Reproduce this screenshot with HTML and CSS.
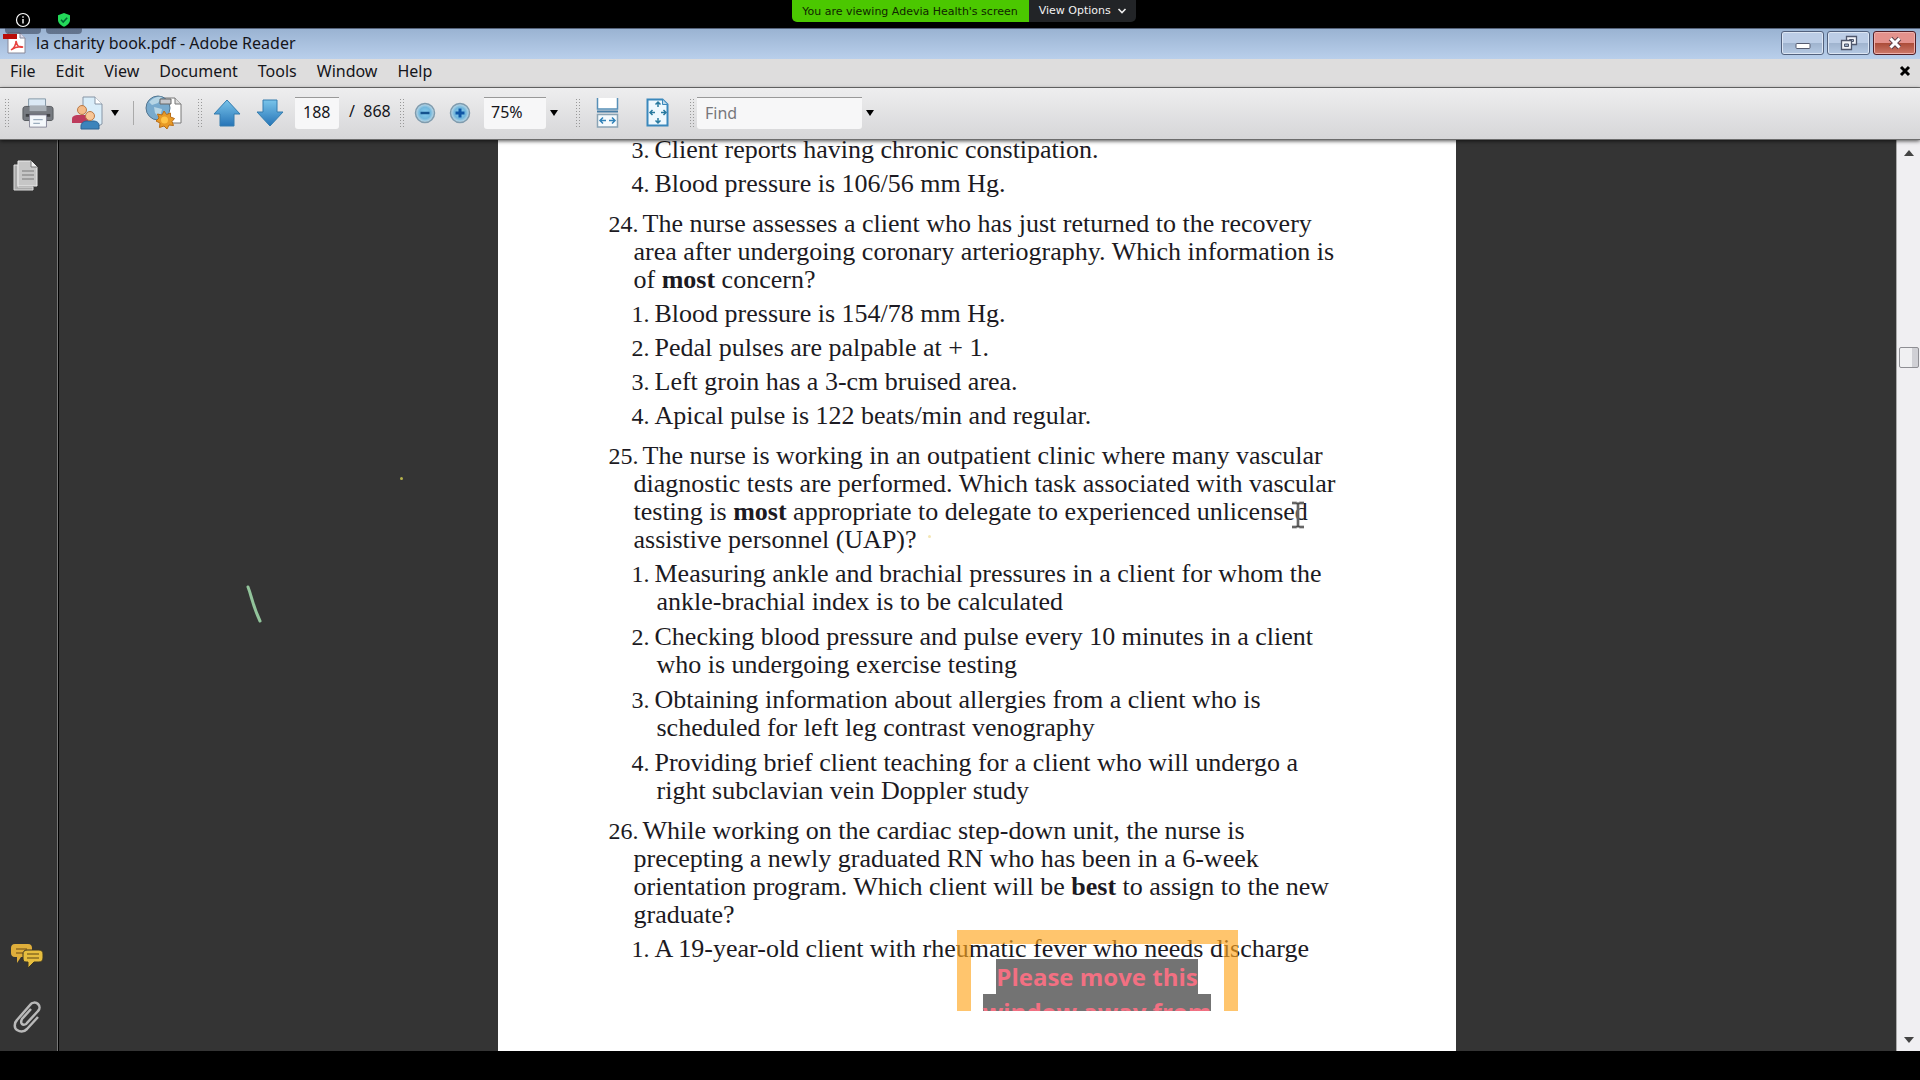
FILE: index.html
```html
<!DOCTYPE html>
<html lang="en">
<head>
<meta charset="utf-8">
<title>la charity book.pdf - Adobe Reader</title>
<link rel="stylesheet" href="styles.css">
</head>
<body>
<header class="meeting-bar">
  <div class="meeting-tools">
    <button class="meeting-tool" aria-label="Meeting information">
      <svg width="16" height="16" viewBox="0 0 16 16"><circle cx="8" cy="8" r="6.5" fill="none" stroke="#fff" stroke-width="1.2"/><path d="M8 7v4.5M8 4.2v1.5" stroke="#fff" stroke-width="1.4"/></svg>
    </button>
    <button class="meeting-tool" aria-label="Encryption">
      <svg width="14" height="16" viewBox="0 0 14 16"><path d="M7 1l6 2.2v4.5c0 3.4-2.6 5.600-6 7.100-3.400-1.500-6-3.700-6-7.100V3.200z" fill="#23d959"/><path d="M4 7.800l2.200 2.200 4-4.200" fill="none" stroke="#063" stroke-width="1.600"/></svg>
    </button>
  </div>
  <div class="share-status">
    <span class="share-label">You are viewing Adevia Health's screen</span>
    <button class="share-options">View Options
      <svg width="10" height="6" viewBox="0 0 10 6"><path d="M1.500 1l3.500 3.500L8.500 1" fill="none" stroke="#eee" stroke-width="1.600"/></svg>
    </button>
  </div>
</header>

<div class="reader">
  <div class="title-bar">
    <svg class="app-icon" width="24" height="22" viewBox="0 0 24 22"><path d="M6 1h12l5 5v15H6z" fill="#fff" stroke="#889" /><path d="M18 1v5h5" fill="#dde" stroke="#889"/><path d="M1 2h14v5H1z" fill="#b90d08"/><path d="M9 18c3-2 5-6 5-9 1 5 3 7 7 6-4-1-8 0-12 3z" fill="none" stroke="#e8423f" stroke-width="1.500"/></svg>
    <h1 class="title">la charity book.pdf - Adobe Reader</h1>
    <div class="window-buttons">
      <button class="window-button" aria-label="Minimize"><svg width="16" height="16" viewBox="0 0 16 16"><rect x="1" y="8.500" width="14" height="5" rx="1" fill="#fff" stroke="#555b70"/></svg></button>
      <button class="window-button" aria-label="Restore"><svg width="18" height="18" viewBox="0 0 18 18"><path d="M6.500 2.500h10v8h-10z" fill="#f3f5fa" stroke="#4e566c" stroke-width="1.300"/><path d="M9.500 5.500h4v2h-4z" fill="#b4c3da" stroke="#4e566c"/><path d="M1.500 6.500h10v9h-10z" fill="#f3f5fa" stroke="#4e566c" stroke-width="1.300"/><path d="M4.500 10h4v2.500h-4z" fill="#9cafc9" stroke="#4e566c"/></svg></button>
      <button class="window-button window-close" aria-label="Close"><svg width="16" height="14" viewBox="0 0 16 14"><path d="M3.500 2.500l9 9M12.500 2.500l-9 9" stroke="#624048" stroke-width="5"/><path d="M3.500 2.500l9 9M12.500 2.500l-9 9" stroke="#fff" stroke-width="3"/></svg></button>
    </div>
  </div>

  <nav class="menu-bar">
    <button class="menu">File</button>
    <button class="menu">Edit</button>
    <button class="menu">View</button>
    <button class="menu">Document</button>
    <button class="menu">Tools</button>
    <button class="menu">Window</button>
    <button class="menu">Help</button>
    <button class="document-close" aria-label="Close document"><svg width="12" height="12" viewBox="0 0 12 12"><path d="M2 2l8 8M10 2l-8 8" stroke="#000" stroke-width="3"/></svg></button>
  </nav>

  <div class="toolbar">
    <span class="grip"></span>
    <button class="tool tool-print" aria-label="Print"><svg width="32" height="34" viewBox="0 0 34 34"><path d="M7 2h18v12H7z" fill="#dbe9f5" stroke="#8195a5"/><path d="M4 10h26c2 0 3 1 3 3v10c0 1-1 2-2 2H3c-1 0-2-1-2-2V13c0-2 1-3 3-3z" fill="#777b81" stroke="#54575c"/><path d="M8 9h18v6H8z" fill="#a9b0b7"/><path d="M4 18h26v3H4z" fill="#404246"/><path d="M8 19h18v13H8z" fill="#f4f8fb" stroke="#889"/><path d="M12 24h10M12 28h7" stroke="#9aacbd" stroke-width="1.500"/></svg></button>
    <button class="tool tool-share" aria-label="Collaborate"><svg width="34" height="36" viewBox="0 0 34 36"><path d="M12 2h12l7 7v20l-7 4H12z" fill="#d9edf9" stroke="#8795a5"/><path d="M24 2v7h7" fill="#fff" stroke="#8795a5"/><path d="M1 28v-4c0-3 3-4 6-4h6c4 0 5 2 5 4v4z" fill="#bd3b5c"/><circle cx="11" cy="15" r="4.500" fill="#f4bb88" stroke="#b97945"/><path d="M10 34v-3c0-3 3-5 6-5h6c4 0 6 2 6 4v4z" fill="#3c84bb" stroke="#2c6493"/><circle cx="19" cy="21" r="4.500" fill="#f8c797" stroke="#b97945"/></svg><svg width="8" height="6" viewBox="0 0 8 6"><path d="M0 0h8L4 6z"/></svg></button>
    <span class="separator"></span>
    <button class="tool tool-web" aria-label="Web capture"><svg width="38" height="36" viewBox="0 0 38 36"><path d="M17 3h13l6 6v19H17z" fill="#fff" stroke="#777"/><path d="M30 3v6h6" fill="#ddd" stroke="#777"/><circle cx="13" cy="13" r="12" fill="#78aacd" stroke="#53758f"/><path d="M4 7c4-5 10-6 13-5l-4 6-6 2zM9 12l8 2-2 9-5-5z" fill="#b6d5e5"/><path d="M15 4h11v5H15z" fill="#c5c7cc" stroke="#666"/><path d="M19 16l2.500 3.500 4-1.500v4l4 1.500-2.500 3 1.500 4-4.500-.5-2 4-3-3-4.500 1.500.5-4.500-4-2 3-3-1.500-4 4.500 1z" fill="#e89a26" stroke="#b96d16"/><circle cx="19.500" cy="25" r="3.500" fill="#ffc346"/></svg></button>
    <span class="grip"></span>
    <button class="tool tool-page" aria-label="Previous page"><svg width="28" height="28" viewBox="0 0 28 28"><defs><linearGradient id="arrow-fill" x2="0" y2="1"><stop stop-color="#79c4ea"/><stop offset="1" stop-color="#2674b7"/></linearGradient></defs><path d="M14 1l13 14h-6v12H7V15H1z" fill="url(#arrow-fill)" stroke="#347daf"/></svg></button>
    <button class="tool tool-page" aria-label="Next page"><svg width="28" height="28" viewBox="0 0 28 28"><path d="M14 27L1 13h6V1h14v12h6z" fill="url(#arrow-fill)" stroke="#347daf"/></svg></button>
    <input class="field page-field" type="text" value="188" aria-label="Page number">
    <span class="page-count">/&nbsp; 868</span>
    <span class="grip"></span>
    <button class="tool tool-zoom" aria-label="Zoom out"><svg width="24" height="24" viewBox="0 0 24 24"><defs><radialGradient id="zoom-fill"><stop stop-color="#86cff2"/><stop offset=".6" stop-color="#72b7dc"/><stop offset="1" stop-color="#c7dce8"/></radialGradient></defs><circle cx="12" cy="12" r="9.500" fill="url(#zoom-fill)" stroke="#7f9bad" stroke-width="1.500"/><path d="M7.500 12h9" stroke="#14528e" stroke-width="2.500"/></svg></button>
    <button class="tool tool-zoom" aria-label="Zoom in"><svg width="24" height="24" viewBox="0 0 24 24"><circle cx="12" cy="12" r="9.500" fill="url(#zoom-fill)" stroke="#7f9bad" stroke-width="1.500"/><path d="M7.500 12h9M12 7.500v9" stroke="#0f56a5" stroke-width="3"/></svg></button>
    <span class="combo">
      <select class="field zoom-field" aria-label="Zoom level"><option>75%</option></select>
      <svg class="combo-caret" width="8" height="6" viewBox="0 0 8 6"><path d="M0 0h8L4 6z"/></svg>
    </span>
    <span class="grip"></span>
    <button class="tool tool-fit" aria-label="Fit width"><svg width="24" height="32" viewBox="0 0 24 32"><path d="M1.500 1v11h20V1" fill="#fff" stroke="#5790b8" stroke-width="1.500"/><path d="M1 14.500h21" stroke="#477da5" stroke-width="2"/><path d="M1.500 30V17.500h20V30z" fill="#f5fafd" stroke="#8aa4b5" stroke-width="1.500"/><path d="M10 23.500H4M7 20.500l-3 3 3 3M13 23.500h6M16 20.500l3 3-3 3" fill="none" stroke="#3182b8" stroke-width="1.500"/></svg></button>
    <button class="tool tool-fit" aria-label="Fit page"><svg width="24" height="30" viewBox="0 0 24 30"><path d="M1.500 1.500h15l5 5v21h-20z" fill="#eef8fe" stroke="#3a88bc" stroke-width="2"/><path d="M16.500 1.500v5h5" fill="#bcd9eb" stroke="#3a88bc"/><path d="M12 9V4M9.500 6.500L12 4l2.500 2.500M12 20v5M9.500 22.500L12 25l2.500-2.500M9 14.500H4M6.500 12L4 14.500 6.500 17M15 14.500h5M17.500 12l2.500 2.500-2.500 2.500" fill="none" stroke="#28799f" stroke-width="1.500"/></svg></button>
    <span class="grip"></span>
    <input class="field find-field" type="text" placeholder="Find" aria-label="Find">
    <button class="find-menu" aria-label="Find options"><svg width="8" height="6" viewBox="0 0 8 6"><path d="M0 0h8L4 6z"/></svg></button>
  </div>

  <div class="workspace">
    <aside class="side-panel">
      <button class="panel-button" aria-label="Pages"><svg width="28" height="34" viewBox="0 0 28 34"><path d="M2 6h4v22h15v3H2z" fill="#aaa" stroke="#ddd"/><path d="M6 2h13l6 6v19H6z" fill="#c6c6c6" stroke="#eee"/><path d="M19 2v6h6" fill="#eee" stroke="#777"/><path d="M10 12h12M10 16h12M10 20h12" stroke="#929292" stroke-width="1.500"/></svg></button>
      <button class="panel-button panel-comments" aria-label="Comments"><svg width="34" height="28" viewBox="0 0 34 28"><path d="M5 2h13c3 0 4 2 4 4v5c0 2-1 4-4 4h-7l-4 6v-6H5c-3 0-4-2-4-4V6c0-2 1-4 4-4z" fill="#dfae3b"/><path d="M6 7h11M6 11h7" stroke="#916b22" stroke-width="1.500"/><path d="M17 8h12c3 0 4 2 4 4v4c0 3-2 4-4 4h-5l-6 6v-6h-2c-2 0-3-1-3-4v-4c0-2 1-4 4-4z" fill="#e6bd3e" stroke="#3b3522"/><path d="M17 12h12M17 16h12" stroke="#8b6d23" stroke-width="1.500"/></svg></button>
      <button class="panel-button" aria-label="Attachments"><svg width="30" height="34" viewBox="0 0 30 34"><path d="M26 17L15 29c-3 3-7 3-10 1s-3-7 0-10L18 5c2-3 6-3 8-1s2 5 0 7L15 23c-1 2-4 2-5 1s-1-3 0-5l9-10" fill="none" stroke="#b9b9b9" stroke-width="2.500"/></svg></button>
    </aside>

    <main class="canvas">
      <article class="page">
        <ul class="options">
          <li><span class="mark">3.</span>Client reports having chronic constipation.</li>
          <li><span class="mark">4.</span>Blood pressure is 106/56 mm Hg.</li>
        </ul>
        <p class="question"><span class="number">24.</span>The nurse assesses a client who has just returned to the recovery<br>area after undergoing coronary arteriography. Which information is<br>of <b>most</b> concern?</p>
        <ul class="options">
          <li><span class="mark">1.</span>Blood pressure is 154/78 mm Hg.</li>
          <li><span class="mark">2.</span>Pedal pulses are palpable at + 1.</li>
          <li><span class="mark">3.</span>Left groin has a 3-cm bruised area.</li>
          <li><span class="mark">4.</span>Apical pulse is 122 beats/min and regular.</li>
        </ul>
        <p class="question"><span class="number">25.</span>The nurse is working in an outpatient clinic where many vascular<br>diagnostic tests are performed. Which task associated with vascular<br>testing is <b>most</b> appropriate to delegate to experienced unlicensed<br>assistive personnel (UAP)?</p>
        <ul class="options options-long">
          <li><span class="mark">1.</span>Measuring ankle and brachial pressures in a client for whom the<br>ankle-brachial index is to be calculated</li>
          <li><span class="mark">2.</span>Checking blood pressure and pulse every 10 minutes in a client<br>who is undergoing exercise testing</li>
          <li><span class="mark">3.</span>Obtaining information about allergies from a client who is<br>scheduled for left leg contrast venography</li>
          <li><span class="mark">4.</span>Providing brief client teaching for a client who will undergo a<br>right subclavian vein Doppler study</li>
        </ul>
        <p class="question"><span class="number">26.</span>While working on the cardiac step-down unit, the nurse is<br>precepting a newly graduated RN who has been in a 6-week<br>orientation program. Which client will be <b>best</b> to assign to the new<br>graduate?</p>
        <ul class="options">
          <li><span class="mark">1.</span>A 19-year-old client with rheumatic fever who needs discharge</li>
        </ul>
        <div class="notice"><p class="notice-text"><span>Please move this<br>window away from</span></p></div>
        <svg class="text-cursor" width="14" height="28" viewBox="0 0 14 28"><path d="M1 2h4l2 1 2-1h4M7 3v22M1 26h4l2-1 2 1h4" fill="none" stroke="#999" stroke-width="3"/><path d="M1 2h4l2 1 2-1h4M7 3v22M1 26h4l2-1 2 1h4" fill="none" stroke="#333" stroke-width="1"/></svg>
        <i class="ink-dot ink-dot-faint"></i>
      </article>
      <svg class="ink-stroke" width="16" height="40" viewBox="0 0 16 40"><path d="M2 2c4 10 4 17 12 34" fill="none" stroke="#92c49b" stroke-width="3" stroke-linecap="round"/></svg>
      <i class="ink-dot ink-dot-left"></i>
    </main>

    <div class="scroll-bar">
      <svg width="10" height="6" viewBox="0 0 10 6"><path d="M0 6h10L5 0z" fill="#444"/></svg>
      <span class="scroll-thumb"></span>
      <svg class="scroll-down" width="10" height="6" viewBox="0 0 10 6"><path d="M0 0h10L5 6z" fill="#444"/></svg>
    </div>
  </div>
</div>
</body>
</html>
```
FILE: styles.css
```css
* { box-sizing: border-box; }

body {
  margin: 0;
  min-height: 100vh;
  padding-bottom: 29px;
  display: flex;
  flex-direction: column;
  background: #000;
  color: #15151a;
  font-family: "Noto Sans", sans-serif;
}

button, input, select { font: inherit; color: inherit; }
button { border: 0; padding: 0; background: none; }
svg { display: block; flex: none; }

/* Meeting bar */
.meeting-bar {
  position: relative;
  z-index: 2;
  height: 28px;
  display: grid;
  grid-template-columns: 1fr auto 1fr;
  padding-left: 8px;
  font: 11px/24px "DejaVu Sans", sans-serif;
}
.meeting-tools { display: flex; gap: 5px; margin-left: -3px; }
.meeting-tool {
  width: 36px;
  height: 34px;
  padding-top: 6px;
  display: grid;
  place-items: center;
  border-radius: 4px;
  background: linear-gradient(#000 28px, rgba(40, 50, 70, .5) 28px);
}
.share-status { display: flex; height: 22px; }
.share-label { padding: 0 11px 0 10px; background: #4bc800; border-radius: 0 0 0 5px; color: #102600; }
.share-options {
  display: flex;
  align-items: center;
  gap: 6px;
  padding: 0 9px 0 10px;
  background: #222427;
  border-radius: 0 0 5px 0;
  color: #f2f2f2;
}

/* Reader window */
.reader { flex: 1; display: flex; flex-direction: column; }
.title-bar {
  height: 31px;
  display: flex;
  align-items: center;
  padding: 0 4px 2px 2px;
  border-top: 1px solid #56637a;
  background: linear-gradient(#9ab3d2, #b9cfeb);
}
.title { flex: 1; margin: 0 0 0 10px; font-size: 16px; line-height: 24px; font-weight: 400; }
.window-buttons { display: flex; gap: 3px; }
.window-button {
  width: 43px;
  height: 24px;
  display: grid;
  place-items: center;
  border: 1px solid #52617d;
  border-radius: 3px;
  box-shadow: inset 0 0 0 1px #dce6f4;
  background: linear-gradient(#bccde6 50%, #9fb3ce 50%, #b5c9e3);
}
.window-close {
  border-color: #521f26;
  box-shadow: inset 0 0 0 1px #eeb1ac;
  background: linear-gradient(#e4928c 50%, #ab4b37 50%, #cd7a6b);
}

.menu-bar {
  height: 29px;
  display: flex;
  align-items: center;
  gap: 20px;
  padding: 0 9px 4px 10px;
  border-bottom: 1px solid #737373;
  background: #dedddd;
  font-size: 16px;
  line-height: 24px;
}
.document-close { margin-left: auto; }

.toolbar {
  position: relative;
  z-index: 1;
  height: 52px;
  display: flex;
  align-items: center;
  padding: 0 4px 2px;
  border-bottom: 1px solid #6c6c6c;
  background: linear-gradient(#eeeeef, #d6d6d8);
  box-shadow: 0 1px 4px rgba(0, 0, 0, .7);
  font-size: 16px;
}
.grip {
  width: 5px;
  height: 30px;
  margin-right: 3px;
  background: radial-gradient(circle, #999 1px, transparent 1px) 0 0 / 3px 3px;
}
.tool { display: flex; align-items: center; justify-content: center; gap: 6px; }
.tool-print { width: 52px; }
.tool-share { width: 62px; }
.separator { width: 1px; height: 24px; margin: 0 0 0 7px; background: #aaa; }
.tool-web { width: 60px; margin-right: 3px; }
.tool-page { width: 43px; }
.field { height: 32px; border: 0; border-top: 1px solid #999; border-radius: 0 0 3px 3px; background: #f7f7f8; }
.page-field { width: 44px; margin-left: 4px; padding: 0 0 3px 8px; }
.page-count { width: 60px; padding: 0 0 3px 10px; white-space: nowrap; }
.tool-zoom { width: 35px; }
.combo { display: grid; align-items: center; width: 88px; margin: 0 3px 0 7px; }
.zoom-field {
  grid-area: 1 / 1;
  width: 62px;
  padding: 0 0 3px 7px;
  appearance: none;
}
.combo-caret { grid-area: 1 / 1; justify-self: end; margin-right: 14px; pointer-events: none; }
.tool-fit { width: 50px; }
.tool-fit + .grip { margin-left: 6px; }
.find-field { width: 165px; padding: 0 0 0 8px; }
.find-field::placeholder { color: #77777b; opacity: 1; }
.find-menu { margin-left: 4px; }

/* Document area */
.workspace { flex: 1; display: flex; background: #343434; }
.side-panel {
  width: 59px;
  padding: 19px 0 17px 12px;
  display: flex;
  flex-direction: column;
  align-items: flex-start;
  gap: 30px;
  border-right: 1px solid #000;
  box-shadow: inset -1px 0 #777;
}
.panel-comments { margin: auto 0 0 -2px; }
.canvas { position: relative; flex: 1; display: flex; justify-content: center; }
.page {
  position: relative;
  width: 958px;
  margin-right: 2px;
  padding-left: 111px;
  overflow: hidden;
  background: #fff;
  color: #1c1a22;
  font: 26px/28px "Liberation Serif", serif;
  white-space: nowrap;
}
.question { margin: 12px 0 6px; padding-left: 25px; text-indent: -25px; }
.number, .mark { display: inline-block; font-size: 24px; text-indent: 0; }
.number { width: 34px; }
.mark { width: 23px; }
.options {
  margin: 0;
  padding: 0 0 0 48px;
  display: flex;
  flex-direction: column;
  gap: 6px;
  list-style: none;
  text-indent: -25px;
}
.options:first-child { margin-top: -4px; }
.options-long { gap: 7px; }

.notice {
  position: absolute;
  left: 459px;
  top: 790px;
  width: 281px;
  height: 81px;
  overflow: hidden;
  border: 14px solid rgba(255, 166, 30, .65);
  border-bottom: 0;
}
.notice-text {
  margin: 15px 0 0;
  text-align: center;
  color: #f27082;
  font: bold 24px/35px "Open Sans", sans-serif;
}
.notice-text span { padding: 1px 0; background: #737373; }
.text-cursor { position: absolute; left: 793px; top: 361px; }
.ink-stroke { position: absolute; left: 187px; top: 445px; }
.ink-dot { position: absolute; width: 3px; height: 3px; border-radius: 50%; background: #b6b34c; }
.ink-dot-left { left: 341px; top: 337px; }
.ink-dot-faint { left: 430px; top: 395px; background: #f4e6b4; }

.scroll-bar {
  width: 24px;
  padding: 10px 0 8px;
  display: flex;
  flex-direction: column;
  align-items: center;
  border-left: 1px solid #aaa;
  background: #f0eff2;
}
.scroll-thumb {
  width: 20px;
  height: 21px;
  margin-top: 191px;
  border: 1px solid #8e8e93;
  border-radius: 2px;
  background: linear-gradient(90deg, #f0f0f2 65%, #d0d0d5 65%);
}
.scroll-down { margin-top: auto; }
```
